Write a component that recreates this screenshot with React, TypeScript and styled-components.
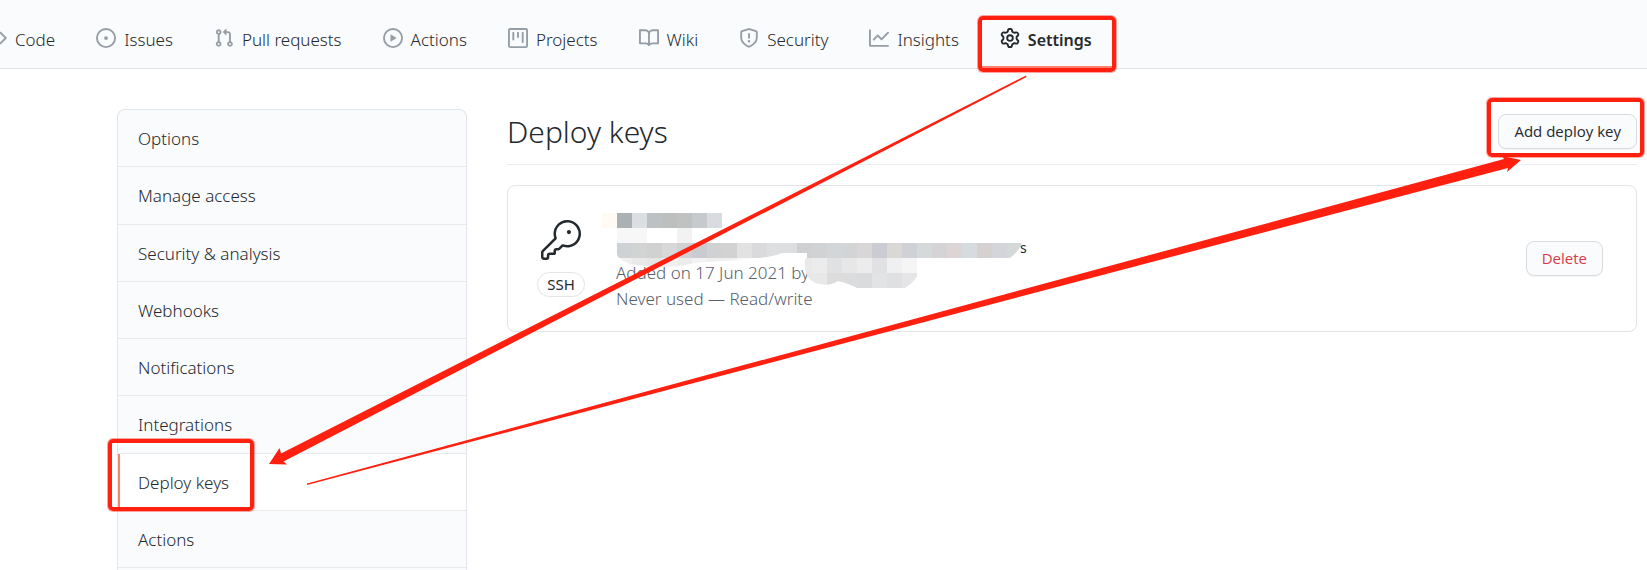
import React from "react";
import styled, { createGlobalStyle } from "styled-components";

const GlobalStyle = createGlobalStyle`
  *, *::before, *::after { box-sizing: border-box; }
  body {
    margin: 0;
    background: #fff;
    color: #24292e;
    font-family: "Noto Sans", "Open Sans", sans-serif;
    font-size: 17px;
    font-weight: 350;
    line-height: 26px;
    overflow-x: hidden;
  }
  h1, p, ul { margin: 0; padding: 0; }
`;

const Page = styled.div`
  position: relative;
  display: flex;
  flex-direction: column;
  min-height: 100vh;
  overflow: hidden;
`;

const RepoNav = styled.nav`
  display: flex;
  gap: 41px;
  height: 69px;
  margin-left: -13px;
  background: #fafbfc;
  border-bottom: 1px solid #e1e4e8;
`;

const Tab = styled.a<{ $active?: boolean }>`
  position: relative;
  display: flex;
  align-items: center;
  gap: 8px;
  padding-top: 8px;
  color: #24292e;
  font-size: ${(p) => (p.$active ? "16px" : "17px")};
  font-weight: ${(p) => (p.$active ? 600 : 350)};
  text-decoration: none;
  white-space: nowrap;

  svg {
    flex: none;
    color: ${(p) => (p.$active ? "#24292e" : "#959da5")};
  }

  &::after {
    content: "";
    display: ${(p) => (p.$active ? "block" : "none")};
    position: absolute;
    right: -20px;
    bottom: -1px;
    left: -20px;
    height: 3px;
    background: #f9826c;
  }
`;

const TabLabel = styled.span`
  padding-top: 3px;
`;

const Body = styled.div`
  display: flex;
  flex: 1;
  align-items: stretch;
  gap: 40px;
  padding: 40px 10px 0 117px;
`;

const Sidebar = styled.nav`
  flex: 0 0 350px;
  background: #fafbfc;
  border: 1px solid #e1e4e8;
  border-bottom: 0;
  border-radius: 8px 8px 0 0;
`;

const Menu = styled.ul`
  display: grid;
  grid-auto-rows: 1fr;
  min-height: 458px;
  list-style: none;
`;

const MenuItem = styled.li`
  display: flex;
  border-bottom: 1px solid #e8eaed;
`;

const MenuLink = styled.a<{ $active?: boolean }>`
  position: relative;
  display: flex;
  flex: 1;
  align-items: center;
  padding: 2px 20px 0;
  color: #24292e;
  text-decoration: none;
  background: ${(p) => (p.$active ? "#fff" : "transparent")};
  box-shadow: ${(p) => (p.$active ? "inset 2px 0 0 #f9826c" : "none")};
`;

const Main = styled.main`
  flex: 1;
  min-width: 0;
`;

const TitleBar = styled.header`
  display: flex;
  align-items: center;
  justify-content: space-between;
  height: 56px;
  padding-bottom: 10px;
  border-bottom: 1px solid #eaecef;
`;

const Title = styled.h1`
  font-size: 30px;
  font-weight: 350;
  line-height: 40px;
`;

const Button = styled.button<{ $danger?: boolean }>`
  position: relative;
  height: 35px;
  padding: 0 15px 2px;
  color: ${(p) => (p.$danger ? "#d73a49" : "#24292e")};
  font: 500 15px/20px "Open Sans", "Noto Sans", sans-serif;
  white-space: nowrap;
  background: #fafbfc;
  border: 1px solid #d9dcdf;
  border-radius: 8px;
  box-shadow: 0 1px 0 rgba(27, 31, 35, 0.04);
`;

const KeyCard = styled.section`
  display: flex;
  align-items: center;
  height: 147px;
  margin-top: 20px;
  padding: 0 33px 0 29px;
  border: 1px solid #e1e4e8;
  border-radius: 8px;
`;

const KeyKind = styled.div`
  display: flex;
  flex-direction: column;
  align-items: center;
  gap: 12px;
  width: 48px;
`;

const Pill = styled.span`
  padding: 0 9px;
  font-size: 15px;
  font-weight: 400;
  line-height: 23px;
  border: 1px solid #e1e4e8;
  border-radius: 13px;
`;

const KeyInfo = styled.div`
  position: relative;
  flex: 1;
  margin-left: 31px;
  padding-top: 54px;
  color: #586069;
`;

const Redaction = styled.svg`
  position: absolute;
  top: -16px;
  left: -16px;
`;

const Fingerprint = styled.code`
  position: absolute;
  top: 29px;
  left: 404px;
  color: #24292e;
  font: 14px/26px "Noto Sans", "Open Sans", sans-serif;
`;

const Marker = styled.span<{ $inset: string }>`
  position: absolute;
  z-index: 1;
  inset: ${(p) => p.$inset};
  border: 4px solid #ff2010;
  border-radius: 5px;
  box-shadow: 0 0 0 1px rgba(255, 32, 16, 0.4);
  pointer-events: none;
`;

const Arrows = styled.svg`
  position: absolute;
  top: 0;
  left: 0;
  pointer-events: none;
`;

const icons = {
  code: "M4.72 3.22a.75.75 0 011.06 1.06L2.06 8l3.72 3.72a.75.75 0 11-1.06 1.06L.47 8.53a.75.75 0 010-1.06l4.25-4.25zm6.56 0a.75.75 0 10-1.06 1.06L13.94 8l-3.72 3.72a.75.75 0 101.06 1.06l4.25-4.25a.75.75 0 000-1.06l-4.25-4.25z",
  issue: "M8 9.5a1.5 1.5 0 100-3 1.5 1.5 0 000 3zM8 0a8 8 0 100 16A8 8 0 008 0zM1.5 8a6.5 6.5 0 1113 0 6.5 6.5 0 01-13 0z",
  pull: "M7.177 3.073L9.573.677A.25.25 0 0110 .854v4.792a.25.25 0 01-.427.177L7.177 3.427a.25.25 0 010-.354zM3.75 2.5a.75.75 0 100 1.5.75.75 0 000-1.5zm-2.25.75a2.25 2.25 0 113 2.122v5.256a2.251 2.251 0 11-1.5 0V5.372A2.25 2.25 0 011.5 3.25zM11 2.5h-1V4h1a1 1 0 011 1v5.628a2.251 2.251 0 101.5 0V5A2.5 2.5 0 0011 2.5zm1 10.25a.75.75 0 111.5 0 .75.75 0 01-1.5 0zM3.75 12a.75.75 0 100 1.5.75.75 0 000-1.5z",
  play: "M1.5 8a6.5 6.5 0 1113 0 6.5 6.5 0 01-13 0zM8 0a8 8 0 100 16A8 8 0 008 0zM6.379 5.227A.25.25 0 006 5.442v5.117a.25.25 0 00.379.214l4.264-2.559a.25.25 0 000-.428L6.379 5.227z",
  project: "M1.75 0A1.75 1.75 0 000 1.75v12.5C0 15.216.784 16 1.75 16h12.5A1.75 1.75 0 0016 14.25V1.75A1.75 1.75 0 0014.25 0H1.75zM1.5 1.75a.25.25 0 01.25-.25h12.5a.25.25 0 01.25.25v12.5a.25.25 0 01-.25.25H1.75a.25.25 0 01-.25-.25V1.75zM11.75 3a.75.75 0 00-.75.75v7.5a.75.75 0 001.5 0v-7.5a.75.75 0 00-.75-.75zm-8.25.75a.75.75 0 011.5 0v5.5a.75.75 0 01-1.5 0v-5.5zM8 3a.75.75 0 00-.75.75v3.5a.75.75 0 001.5 0v-3.5A.75.75 0 008 3z",
  book: "M0 1.75A.75.75 0 01.75 1h4.253c1.227 0 2.317.59 3 1.501A3.744 3.744 0 0111.006 1h4.245a.75.75 0 01.75.75v10.5a.75.75 0 01-.75.75h-4.507a2.25 2.25 0 00-1.591.659l-.622.621a.75.75 0 01-1.06 0l-.622-.621A2.25 2.25 0 005.258 13H.75a.75.75 0 01-.75-.75V1.75zm8.755 3a2.25 2.25 0 012.25-2.25H14.5v9h-3.757c-.71 0-1.4.201-1.992.572l.004-7.322zm-1.504 7.324l.004-5.073-.002-2.253A2.25 2.25 0 005.003 2.5H1.5v9h3.757a3.75 3.75 0 011.994.574z",
  shield: "M7.467.133a1.75 1.75 0 011.066 0l5.25 1.68A1.75 1.75 0 0115 3.48V7c0 1.566-.32 3.182-1.303 4.682-.983 1.498-2.585 2.813-5.032 3.855a1.7 1.7 0 01-1.33 0c-2.447-1.042-4.049-2.357-5.032-3.855C1.32 10.182 1 8.566 1 7V3.48a1.75 1.75 0 011.217-1.667l5.25-1.68zm.61 1.429a.25.25 0 00-.153 0l-5.25 1.68a.25.25 0 00-.174.238V7c0 1.358.275 2.666 1.057 3.86.784 1.194 2.121 2.34 4.366 3.297a.2.2 0 00.154 0c2.245-.956 3.582-2.104 4.366-3.298C13.225 9.666 13.5 8.36 13.5 7V3.48a.25.25 0 00-.174-.237l-5.25-1.68zM9 10.5a1 1 0 11-2 0 1 1 0 012 0zm-.25-5.75a.75.75 0 10-1.5 0v3a.75.75 0 001.5 0v-3z",
  graph: "M1.5 1.75a.75.75 0 00-1.5 0v12.5c0 .414.336.75.75.75h14.5a.75.75 0 000-1.5H1.5V1.75zm14.28 2.53a.75.75 0 00-1.06-1.06L10 7.94 7.53 5.47a.75.75 0 00-1.06 0L3.22 8.72a.75.75 0 001.06 1.06L7 7.06l2.47 2.47a.75.75 0 001.06 0l5.25-5.25z",
  gear: "M7.429 1.525a6.593 6.593 0 011.142 0c.036.003.108.036.137.146l.289 1.105c.147.56.55.967.997 1.189.174.086.341.183.501.29.417.278.97.423 1.53.27l1.102-.303c.11-.03.175.016.195.046.219.31.41.641.573.989.014.031.022.11-.059.19l-.815.806c-.411.406-.562.957-.53 1.456a4.588 4.588 0 010 .582c-.032.499.119 1.05.53 1.456l.815.806c.08.08.073.159.059.19a6.494 6.494 0 01-.573.99c-.02.029-.086.074-.195.045l-1.103-.303c-.559-.153-1.112-.008-1.529.27-.16.107-.327.204-.5.29-.449.222-.851.628-.998 1.189l-.289 1.105c-.029.11-.101.143-.137.146a6.613 6.613 0 01-1.142 0c-.036-.003-.108-.037-.137-.146l-.289-1.105c-.147-.56-.55-.967-.997-1.189a4.502 4.502 0 01-.501-.29c-.417-.278-.97-.423-1.53-.27l-1.102.303c-.11.03-.175-.016-.195-.046a6.492 6.492 0 01-.573-.989c-.014-.031-.022-.11.059-.19l.815-.806c.411-.406.562-.957.53-1.456a4.587 4.587 0 010-.582c.032-.499-.119-1.05-.53-1.456l-.815-.806c-.08-.08-.073-.159-.059-.19a6.44 6.44 0 01.573-.99c.02-.029.086-.075.195-.045l1.103.303c.559.153 1.112.008 1.529-.27.16-.107.327-.204.5-.29.449-.222.851-.628.998-1.189l.289-1.105c.029-.11.101-.143.137-.146zM8 0c-.236 0-.47.01-.701.03-.743.065-1.29.615-1.458 1.261l-.29 1.106c-.017.066-.078.158-.211.224a5.994 5.994 0 00-.668.386c-.123.082-.233.09-.3.071L3.27 2.776c-.644-.177-1.392.02-1.82.63a7.977 7.977 0 00-.704 1.217c-.315.675-.111 1.422.363 1.891l.815.806c.05.048.098.147.088.294a6.084 6.084 0 000 .772c.01.147-.038.246-.088.294l-.815.806c-.474.469-.678 1.216-.363 1.891.2.428.436.835.704 1.218.428.609 1.176.806 1.82.63l1.103-.303c.066-.019.176-.011.299.071.213.143.436.272.668.386.133.066.194.158.212.224l.289 1.106c.169.646.715 1.196 1.458 1.26a8.094 8.094 0 001.402 0c.743-.064 1.29-.614 1.458-1.26l.29-1.106c.017-.066.078-.158.211-.224a5.98 5.98 0 00.668-.386c.123-.082.233-.09.3-.071l1.102.302c.644.177 1.392-.02 1.82-.63.268-.382.505-.789.704-1.217.315-.675.111-1.422-.364-1.891l-.814-.806c-.05-.048-.098-.147-.088-.294a6.1 6.1 0 000-.772c-.01-.147.039-.246.088-.294l.814-.806c.475-.469.679-1.216.364-1.891a7.992 7.992 0 00-.704-1.218c-.428-.609-1.176-.806-1.82-.63l-1.103.303c-.066.019-.176.011-.299-.071a5.991 5.991 0 00-.668-.386c-.133-.066-.194-.158-.212-.224L10.16 1.29C9.99.645 9.444.095 8.701.031A8.094 8.094 0 008 0zm1.5 8a1.5 1.5 0 11-3 0 1.5 1.5 0 013 0zM11 8a3 3 0 11-6 0 3 3 0 016 0z",
};

const tabs: { label: string; icon: keyof typeof icons }[] = [
  { label: "Code", icon: "code" },
  { label: "Issues", icon: "issue" },
  { label: "Pull requests", icon: "pull" },
  { label: "Actions", icon: "play" },
  { label: "Projects", icon: "project" },
  { label: "Wiki", icon: "book" },
  { label: "Security", icon: "shield" },
  { label: "Insights", icon: "graph" },
  { label: "Settings", icon: "gear" },
];

const menu = [
  "Options",
  "Manage access",
  "Security & analysis",
  "Webhooks",
  "Notifications",
  "Integrations",
  "Deploy keys",
  "Actions",
];

/* Rows of 15px mosaic cells that hide the key's name, fingerprint and owner. */
const nameCells = ["#fffaf4", "#a9b1b5", "#dcdfe1", "#bcc2c3", "#bdbfbf", "#c0c2c1", "#c6cacc", "#dadbe0"];
const hazeCells = ["#f7f7f7", "#f7f7f7", "#ffffff", "#ffffff", "#f2f2f2"];
const printCells = [
  "#cfd2d4", "#d2d4d4", "#d1d1d1", "#d8d8d8", "#d0d1d3", "#c9cbd0", "#d0d1d2", "#d2d2d2", "#e2e2e3",
  "#dadadc", "#dedfe0", "#dcdee0", "#cfd0d1", "#d1d2d3", "#d2d6d8", "#d3d4d5", "#d8d6d7", "#cacbd3",
  "#d9d8d4", "#cfd1d6", "#d6d9da", "#d5d3d5", "#dcd4d5", "#d5dbdf", "#d6d1d1", "#d3d5da", "#d4d8d9",
];
const fadeCells = ["#efefef", "#e9e9e9", "#e6e6e6", "#f0f0f0", "#ececec", "#f2f2f2", "#efefef", "#f1f1f1", "#f5f5f5"];
const ownerTop = ["#e9e9ea", "#ececed", "#e0e1e3", "#e7e7e8", "#ececec", "#e1e1e4", "#eff0f2", "#f5f5f5"];
const ownerBottom = ["#e8e8e8", "#e8e8e8", "#dcdcdd", "#dbdcdd", "#dadbdc", "#e2e3e5", "#dfe0e2", "#e5e5e7"];

const Cells = ({ x, y, colors }: { x: number; y: number; colors: string[] }) => (
  <g shapeRendering="crispEdges">
    {colors.map((c, i) => (
      <rect key={i} x={x + i * 15} y={y} width="15" height="15" fill={c} />
    ))}
  </g>
);

const Icon = ({ d }: { d: string }) => (
  <svg width="20" height="20" viewBox="0 0 16 16" fill="currentColor" aria-hidden="true">
    <path fillRule="evenodd" d={d} />
  </svg>
);

const KeyIcon = () => (
  <svg width="40" height="40" viewBox="0 0 24 24" fill="#24292e" aria-hidden="true">
    <path d="M16.75 8.5a1.25 1.25 0 100-2.5 1.25 1.25 0 000 2.5z" />
    <path
      fillRule="evenodd"
      d="M15.75 0a8.25 8.25 0 00-7.851 10.79L.513 18.178A1.75 1.75 0 000 19.414v2.836C0 23.217.784 24 1.75 24h1.5A1.75 1.75 0 005 22.25v-1a.25.25 0 01.25-.25h2.735a.75.75 0 00.545-.22l.214-.213A.875.875 0 009 19.948V18.5a.25.25 0 01.25-.25h1.086c.464 0 .91-.184 1.237-.513l1.636-1.636A8.25 8.25 0 1015.75 0zM9 8.25a6.75 6.75 0 114.288 6.287.75.75 0 00-.804.168l-1.971 1.972a.25.25 0 01-.177.073H9.25A1.75 1.75 0 007.5 18.5v1H5.25a1.75 1.75 0 00-1.75 1.75v1a.25.25 0 01-.25.25h-1.5a.25.25 0 01-.25-.25v-2.836a.25.25 0 01.073-.177l7.722-7.721a.75.75 0 00.168-.804A6.73 6.73 0 019 8.25z"
    />
  </svg>
);

export default function App() {
  return (
    <Page>
      <GlobalStyle />
      <RepoNav aria-label="Repository">
        {tabs.map((t) => (
          <Tab key={t.label} href="#" $active={t.label === "Settings"}>
            <Icon d={icons[t.icon]} />
            <TabLabel>{t.label}</TabLabel>
            {t.label === "Settings" && <Marker $inset="16px -24px -4px -22px" />}
          </Tab>
        ))}
      </RepoNav>
      <Body>
        <Sidebar aria-label="Settings">
          <Menu>
            {menu.map((m) => (
              <MenuItem key={m}>
                <MenuLink href="#" $active={m === "Deploy keys"}>
                  {m}
                  {m === "Deploy keys" && <Marker $inset="-15px 212px -1px -10px" />}
                </MenuLink>
              </MenuItem>
            ))}
          </Menu>
        </Sidebar>
        <Main>
          <TitleBar>
            <Title>Deploy keys</Title>
            <Button>
              Add deploy key
              <Marker $inset="-17px -8px -9px -12px" />
            </Button>
          </TitleBar>
          <KeyCard>
            <KeyKind>
              <KeyIcon />
              <Pill>SSH</Pill>
            </KeyKind>
            <KeyInfo>
              <p>Added on 17 Jun 2021 by</p>
              <p>Never used — Read/write</p>
              <Fingerprint>s</Fingerprint>
              <Redaction width="440" height="100" viewBox="600 190 440 100" aria-hidden="true">
                <clipPath id="print">
                  <path d="M617 243H1022C1020 249 1015 254 1010 258H807V253H782C770 258 755 258 738 260C715 262 700 261 680 266C665 268 640 266 630 264C622 261 617 257 617 254Z" />
                </clipPath>
                <clipPath id="owner">
                  <path d="M807 253C803 262 804 274 812 281C820 286 831 286 838 281C846 283 852 285 857 288H905C910 285 915 280 917 276V258H807Z" />
                </clipPath>
                <Cells x={602} y={213} colors={nameCells} />
                <Cells x={617} y={228} colors={hazeCells} />
                <g clipPath="url(#print)">
                  <Cells x={617} y={243} colors={printCells} />
                  <Cells x={617} y={258} colors={fadeCells} />
                </g>
                <g clipPath="url(#owner)">
                  <Cells x={797} y={258} colors={ownerTop} />
                  <Cells x={797} y={273} colors={ownerBottom} />
                </g>
              </Redaction>
            </KeyInfo>
            <Button $danger>Delete</Button>
          </KeyCard>
        </Main>
      </Body>
      <Arrows width="1647" height="570" viewBox="0 0 1647 570" fill="#ff2010" aria-hidden="true">
        <path d="M1026 75.500L281 453.500L279.500 448L269 464L287 464.500L283.500 461.500L1026.500 77Z" />
        <path d="M307 483.500L1504 159L1502 156L1521 160L1507 172L1508 168L307 485Z" />
      </Arrows>
    </Page>
  );
}
